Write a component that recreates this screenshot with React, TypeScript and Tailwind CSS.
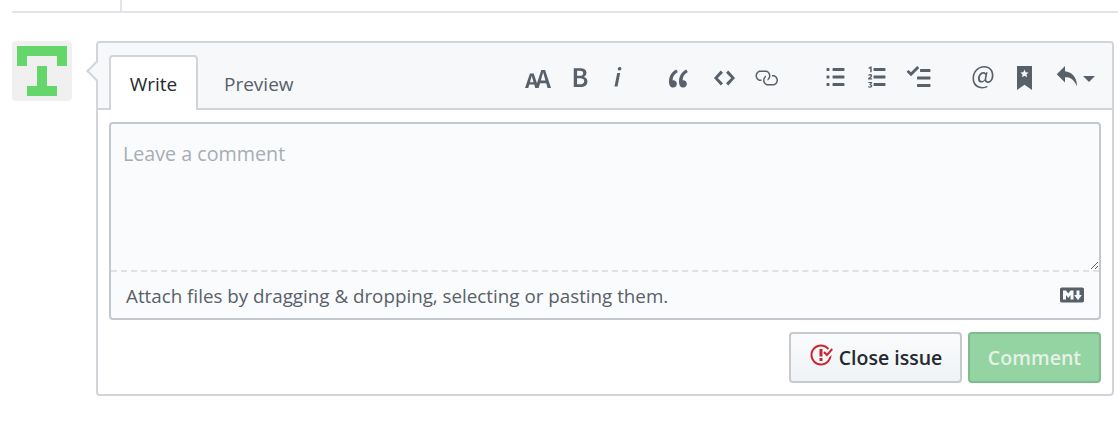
const ICON = "fill-[#586069] block shrink-0";

function Octicon({ w, h, vb, d, className = "", stretch = false }: { w: number; h: number; vb: string; d: string; className?: string; stretch?: boolean }) {
  return (
    <svg width={w} height={h} viewBox={vb} preserveAspectRatio={stretch ? "none" : undefined} className={`${ICON} ${className}`}>
      <path fillRule="evenodd" d={d} />
    </svg>
  );
}

function Identicon() {
  return (
    <div className="w-[60px] h-[60px] shrink-0 rounded-[4px] bg-[#f0f0f0]">
      <svg width="60" height="60" viewBox="0 0 60 60" className="block fill-[#65d66a]">
        <path d="M5 5h50v20H45V15H15v10H5zM25 25h10v20h10v10H15V45h10z" />
      </svg>
    </div>
  );
}

function Toolbar() {
  return (
    <div className="ml-auto mr-[17px] mt-[22px] flex items-start">
      <Octicon w={26} h={18} vb="0 2 17.31 12" stretch className="mt-[5px]" d="M13.62 9.08L12.1 3.66h-.06l-1.5 5.42h3.08zM5.7 10.13S4.68 6.52 4.53 6.02h-.08l-1.13 4.11H5.7zM17.31 14h-2.25l-.95-3.25h-4.07L9.09 14H6.84l-.69-2.33H2.87L2.17 14H0l3.3-9.59h2.5l2.17 6.34L10.86 2h2.52l3.93 12z" />
      <Octicon w={16} h={25} vb="0 0 10 16" className="ml-[21px]" d="M1 2h3.83c2.48 0 4.3.75 4.3 2.95 0 1.14-.63 2.23-1.67 2.61v.06c1.33.3 2.3 1.23 2.3 2.86 0 2.39-1.97 3.52-4.61 3.52H1V2zm3.66 4.95c1.67 0 2.38-.66 2.38-1.69 0-1.17-.78-1.61-2.34-1.61H3.13v3.3h1.53zm.27 5.39c1.77 0 2.75-.64 2.75-1.98 0-1.27-.95-1.81-2.75-1.81h-1.8v3.8h1.8v-.01z" />
      <Octicon w={9} h={25} vb="0 0 6 16" className="ml-[25px]" d="M2.81 5h1.98L3 14H1l1.81-9zm.36-2.7c0-.7.58-1.3 1.33-1.3.56 0 1.13.38 1.13 1.03 0 .75-.59 1.3-1.33 1.3-.58 0-1.13-.38-1.13-1.03z" />
      <Octicon w={20} h={23} vb="0 0 14 16" className="ml-[47px] mt-[2px]" d="M6.16 3.5C3.73 5.06 2.55 6.67 2.55 9.36c.16-.05.3-.05.44-.05 1.27 0 2.5.86 2.5 2.41 0 1.61-1.03 2.61-2.5 2.61-1.9 0-2.99-1.52-2.99-4.25 0-3.8 1.75-6.53 5.02-8.42L6.16 3.5zm7 0c-2.43 1.56-3.61 3.17-3.61 5.86.16-.05.3-.05.44-.05 1.27 0 2.5.86 2.5 2.41 0 1.61-1.03 2.61-2.5 2.61-1.89 0-2.98-1.52-2.98-4.25 0-3.8 1.75-6.53 5.02-8.42l1.14 1.84h-.01z" />
      <Octicon w={21} h={24} vb="0 0 14 16" className="ml-[25px] mt-[1px]" d="M9.5 3L8 4.5 11.5 8 8 11.5 9.5 13 14 8 9.5 3zm-5 0L0 8l4.5 5L6 11.5 2.5 8 6 4.5 4.5 3z" />
      <Octicon w={24} h={24} vb="0 0 16 16" className="ml-[19px] mt-[1px]" d="M4 9h1v1H4c-1.5 0-3-1.69-3-3.5S2.55 3 4 3h4c1.45 0 3 1.69 3 3.5 0 1.41-.91 2.72-2 3.25V8.59c.58-.45 1-1.27 1-2.09C10 5.22 8.98 4 8 4H4c-.98 0-2 1.22-2 2.5S3 9 4 9zm9-3h-1v1h1c1 0 2 1.22 2 2.5S13.98 12 13 12H9c-.98 0-2-1.22-2-2.5 0-.83.42-1.64 1-2.09V6.25c-1.09.53-2 1.84-2 3.25C6 11.31 7.55 13 9 13h4c1.45 0 3-1.69 3-3.5S14.5 6 13 6z" />
      <Octicon w={19} h={24} vb="0 0 12 16" className="ml-[48px]" d="M2 13c0 .59 0 1-.59 1H.59C0 14 0 13.59 0 13c0-.59 0-1 .59-1h.81c.59 0 .59.41.59 1H2zm2.59-9h6.81c.59 0 .59-.41.59-1 0-.59 0-1-.59-1H4.59C4 2 4 2.41 4 3c0 .59 0 1 .59 1zM1.41 7H.59C0 7 0 7.41 0 8c0 .59 0 1 .59 1h.81c.59 0 .59-.41.59-1 0-.59 0-1-.59-1h.01zm0-5H.59C0 2 0 2.41 0 3c0 .59 0 1 .59 1h.81c.59 0 .59-.41.59-1 0-.59 0-1-.59-1h.01zm10 5H4.59C4 7 4 7.41 4 8c0 .59 0 1 .59 1h6.81c.59 0 .59-.41.59-1 0-.59 0-1-.59-1h.01zm0 5H4.59C4 12 4 12.41 4 13c0 .59 0 1 .59 1h6.81c.59 0 .59-.41.59-1 0-.59 0-1-.59-1h.01z" />
      <svg width="19" height="24" viewBox="0 0 12 16" className={`${ICON} ml-[22px]`}>
        <path d="M4.6 2h6.8c.6 0 .6.4.6 1s0 1-.6 1H4.6C4 4 4 3.600 4 3s0-1 .6-1zm0 5h6.8c.6 0 .6.4.6 1s0 1-.6 1H4.600C4 9 4 8.600 4 8s0-1 .6-1zm0 5h6.8c.6 0 .6.4.6 1s0 1-.6 1H4.6C4 14 4 13.600 4 13s0-1 .6-1z" />
        <path d="M.8 1.600 2 1h.8v3.900H1.800V2.200l-1 .4z" />
        <path d="M.4 6.700C.8 6.200 1.300 6 1.800 6c.8 0 1.300.4 1.300 1.100 0 .6-.4 1-1.300 1.700h1.300v.8H.4v-.7c1.300-1 1.700-1.400 1.700-1.700 0-.3-.2-.4-.4-.4-.3 0-.5.2-.8.5z" />
        <path d="M.5 11.300h2.600v.7l-.9.8c.6.100 1 .5 1 1.100 0 .8-.6 1.300-1.500 1.300-.6 0-1.100-.2-1.400-.5l.4-.7c.3.2.6.4.9.4.3 0 .6-.2.6-.5s-.3-.5-.9-.5v-.6l.8-.8H.5z" />
      </svg>
      <Octicon w={25} h={24} vb="0 0 16 16" className="ml-[20px] mt-[1px]" d="M15.41 9H7.59C7 9 7 8.59 7 8c0-.59 0-1 .59-1h7.810c.59 0 .59.41.59 1 0 .59 0 1-.59 1h.01zM9.590 4C9 4 9 3.590 9 3c0-.59 0-1 .59-1h5.810c.59 0 .59.41.59 1 0 .59 0 1-.59 1H9.590zM0 3.910l1.410-1.300L3 4.200 7.090 0 8.500 1.410 3 6.910l-3-3zM7.590 12h7.810c.59 0 .59.41.59 1 0 .59 0 1-.59 1H7.590C7 14 7 13.590 7 13c0-.59 0-1 .59-1z" />
      <Octicon w={22} h={24} vb="0 0 14 16" className="ml-[41px] mt-[1px]" d="M6.580 15c1.250 0 2.520-.31 3.560-.94l-.42-.94c-.84.52-1.890.83-3.030.83-3.230 0-5.640-2.080-5.640-5.720 0-4.370 3.230-7.180 6.580-7.180 3.450 0 5.220 2.190 5.220 5.200 0 2.390-1.340 3.860-2.500 3.860-1.050 0-1.360-.73-1.050-2.190l.73-3.750H8.980l-.11.72c-.41-.63-.94-.83-1.560-.83-2.190 0-3.660 2.390-3.660 4.380 0 1.670.94 2.610 2.300 2.610.84 0 1.670-.53 2.300-1.250.11.94.94 1.450 1.980 1.450 1.670 0 3.770-1.670 3.770-5C14 2.610 11.590 0 7.830 0 3.660 0 0 3.330 0 8.330 0 12.710 2.920 15 6.580 15zm-.31-5c-.73 0-1.360-.52-1.360-1.670 0-1.450.94-3.220 2.410-3.220.52 0 .84.2 1.250.83l-.52 3.020c-.63.73-1.250 1.040-1.780 1.040z" />
      <svg width="15" height="24" viewBox="0 0 10 16" preserveAspectRatio="none" className={`${ICON} ml-[23px] mt-[1px]`}>
        <path fillRule="evenodd" d="M0 0h10v16L5 12.500 0 16zM5 2.300l.8 1.800 1.900.2-1.400 1.300.4 1.900L5 6.500l-1.700 1 .4-1.900-1.400-1.300 1.900-.2z" />
      </svg>
      <Octicon w={21} h={24} vb="0 0 14 16" className="ml-[24px] mt-[1px]" d="M6 3.500c3.920.44 8 3.125 8 10-2.312-5.062-4.750-6-8-6V11L.5 5.500 6 0v3.500z" />
      <svg width="12" height="6" viewBox="0 0 12 6" className={`${ICON} ml-[6px] mt-[11px]`}>
        <path d="M0 0h12L6 6z" />
      </svg>
    </div>
  );
}

function CommentBody() {
  return (
    <div className="rounded-[4px] border-2 border-[#c3c8cf] bg-[#fafbfc]">
      <textarea
        placeholder="Leave a comment"
        className="block w-full h-[146px] resize-y bg-transparent px-[12px] pt-[17px] text-[19.7px] leading-[26px] outline-none placeholder:text-[#a8adb3]"
      />
      <div className="flex h-[48px] items-center justify-between border-t-2 border-dashed border-[#dfe2e5] px-[15px]">
        <span className="pt-[2px] text-[18.8px] leading-[26px] text-[#586069]">
          Attach files by dragging &amp; dropping, selecting or pasting them.
        </span>
        <Octicon w={24} h={24} vb="0 0 16 16" d="M14.85 3H1.150C.52 3 0 3.520 0 4.150v7.690C0 12.480.52 13 1.150 13h13.690c.64 0 1.150-.52 1.150-1.150v-7.700C16 3.520 15.480 3 14.850 3zM9 11H7V8L5.500 9.920 4 8v3H2V5h2l1.500 2L7 5h2v6zm2.990.5L9.500 8H11V5h2v3h1.500l-2.510 3.500z" />
      </div>
    </div>
  );
}

export default function App() {
  return (
    <div className="h-[427px] w-[1118px] overflow-hidden bg-white font-['Open_Sans','Noto_Sans',sans-serif]">
      <div className="ml-[12px] h-[13px] border-b-2 border-[#e1e4e8]">
        <div className="ml-[108px] h-full w-[2px] bg-[#e1e4e8]" />
      </div>

      <div className="ml-[12px] mt-[28px] flex gap-[24px]">
        <Identicon />

        <div className="relative h-[355px] w-[1018px] rounded-[4px] border-2 border-[#d1d5da]">
          {/* caret pointing at the avatar */}
          <div className="absolute left-[-9px] top-[21px] h-[14px] w-[14px] rotate-45 border-b-2 border-l-2 border-[#d1d5da] bg-[#f6f8fa]" />

          <div className="relative flex h-[67px] rounded-t-[3px] border-b-2 border-[#d1d5da] bg-[#f6f8fa]">
            <div className="ml-[11px] mt-[12px] -mb-[2px] flex h-[55px] w-[89px] items-center justify-center rounded-t-[4px] border-2 border-b-0 border-[#d1d5da] bg-white pt-[2px] text-[19px] text-[#24292e]">
              Write
            </div>
            <div className="ml-[26px] mt-[12px] flex h-[53px] items-center pt-[6px] text-[19px] text-[#586069]">
              Preview
            </div>
            <Toolbar />
          </div>

          <div className="px-[11px] pt-[12px]">
            <CommentBody />
            <div className="mt-[12px] flex justify-end gap-[6px]">
              <button className="flex h-[51px] w-[173px] items-center justify-center gap-[6px] rounded-[4px] border-2 border-[#c6cacf] bg-gradient-to-b from-[#fafbfc] to-[#eff3f6] text-[19.5px] font-semibold text-[#24292e]">
                <svg width="24" height="24" viewBox="0 0 16 16" className="mb-[6px] block fill-[#cb2431]">
                  <path fillRule="evenodd" d="M7 10h2v2H7v-2zm2-6H7v5h2V4zm1.500 1.500l-1 1L12 9l4-4.500-1-1L12 7l-1.500-1.500zM8 13.700A5.710 5.710 0 0 1 2.300 8c0-3.140 2.560-5.700 5.700-5.700 1.830 0 3.450.88 4.500 2.200l.92-.92A6.947 6.947 0 0 0 8 1C4.140 1 1 4.140 1 8s3.140 7 7 7 7-3.140 7-7l-1.520 1.520c-.66 2.410-2.860 4.190-5.480 4.190v-.01z" />
                </svg>
                Close issue
              </button>
              <button className="flex h-[51px] w-[133px] items-center justify-center rounded-[4px] border-2 border-[#7fbb8e] bg-[#94d3a2] text-[19.6px] font-semibold text-[#e4f2e7]">
                Comment
              </button>
            </div>
          </div>
        </div>
      </div>
    </div>
  );
}
